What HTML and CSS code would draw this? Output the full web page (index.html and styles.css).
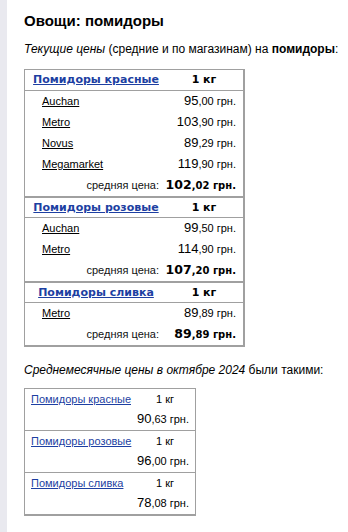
FILE: index.html
```html
<!DOCTYPE html>
<html lang="ru">
<head>
<meta charset="utf-8">
<link rel="stylesheet" href="styles.css">
</head>
<body>
<div class="page">
  <div class="strip"></div>
  <main class="content">
    <h1 class="title">Овощи: помидоры</h1>
    <p class="intro"><i>Текущие цены</i> (средние и по магазинам) на <b>помидоры</b>:</p>

    <table class="prices">
      <tr class="head"><td class="prod"><a href="#">Помидоры красные</a></td><td class="unit">1 кг</td></tr>
      <tr class="shop"><td><a href="#">Auchan</a></td><td class="pr"><span class="big">95</span>,00 грн.</td></tr>
      <tr class="shop"><td><a href="#">Metro</a></td><td class="pr"><span class="big">103</span>,90 грн.</td></tr>
      <tr class="shop"><td><a href="#">Novus</a></td><td class="pr"><span class="big">89</span>,29 грн.</td></tr>
      <tr class="shop"><td><a href="#">Megamarket</a></td><td class="pr"><span class="big">119</span>,90 грн.</td></tr>
      <tr class="avg"><td class="lbl">средняя цена:</td><td class="pr"><span class="big">102</span>,02 грн.</td></tr>

      <tr class="head"><td class="prod"><a href="#">Помидоры розовые</a></td><td class="unit">1 кг</td></tr>
      <tr class="shop"><td><a href="#">Auchan</a></td><td class="pr"><span class="big">99</span>,50 грн.</td></tr>
      <tr class="shop"><td><a href="#">Metro</a></td><td class="pr"><span class="big">114</span>,90 грн.</td></tr>
      <tr class="avg"><td class="lbl">средняя цена:</td><td class="pr"><span class="big">107</span>,20 грн.</td></tr>

      <tr class="head"><td class="prod"><a href="#">Помидоры сливка</a></td><td class="unit">1 кг</td></tr>
      <tr class="shop"><td><a href="#">Metro</a></td><td class="pr"><span class="big">89</span>,89 грн.</td></tr>
      <tr class="avg"><td class="lbl">средняя цена:</td><td class="pr"><span class="big">89</span>,89 грн.</td></tr>
    </table>

    <p class="intro month"><i>Среднемесячные цены в октябре 2024</i> были такими:</p>

    <table class="monthly">
      <tr class="mhead"><td class="mprod"><a href="#">Помидоры красные</a></td><td class="munit">1 кг</td></tr>
      <tr class="mprice"><td></td><td class="pr"><span class="big">90</span>,63 грн.</td></tr>
      <tr class="mhead"><td class="mprod"><a href="#">Помидоры розовые</a></td><td class="munit">1 кг</td></tr>
      <tr class="mprice"><td></td><td class="pr"><span class="big">96</span>,00 грн.</td></tr>
      <tr class="mhead"><td class="mprod"><a href="#">Помидоры сливка</a></td><td class="munit">1 кг</td></tr>
      <tr class="mprice"><td></td><td class="pr"><span class="big">78</span>,08 грн.</td></tr>
    </table>

    <h2 class="next">Минимальные цены на помидоры в Днепре</h2>
  </main>
</div>
</body>
</html>
```

FILE: styles.css
```css
html, body {
  margin: 0;
  padding: 0;
  background: #fff;
}
body {
  font-family: "Liberation Sans", Arial, sans-serif;
  color: #000;
}
.page {
  display: flex;
  min-height: 532px;
}
.strip {
  width: 7px;
  flex: none;
  background: #e9e9ef;
}
.content {
  padding: 0 0 0 17px;
  flex: 1;
  min-width: 0;
}
.title {
  font-size: 15px;
  font-weight: bold;
  margin: 12px 0 0;
  line-height: 18px;
}
.intro {
  font-size: 12px;
  margin: 12px 0 0;
  line-height: 15px;
  white-space: nowrap;
}
.prices {
  margin-top: 12px;
  width: 221px;
  border-collapse: collapse;
  border: 1px solid #a0a0a0;
  border-bottom-width: 2px;
  border-right-width: 2px;
}
.prices td {
  padding: 0;
}
.head td {
  line-height: 19px;
  border-top: 2px solid #a0a0a0;
  border-bottom: 1px solid #a0a0a0;
  font-family: "DejaVu Sans", Verdana, sans-serif;
  font-weight: bold;
  font-size: 11px;
  vertical-align: middle;
}
.prices tr.head:first-child td {
  border-top: 0;
  line-height: 20px;
}
.head .prod {
  text-align: center;
  padding-left: 2px;
}
.head a {
  color: #1d3fa2;
  text-decoration: underline;
}
.head .unit {
  text-align: center;
  width: 78px;
}
.shop td {
  line-height: 21px;
  font-size: 11px;
  vertical-align: middle;
}
.shop td:first-child {
  padding-left: 17px;
}
.shop a {
  color: #000;
  text-decoration: underline;
}
.pr {
  text-align: right;
  padding-right: 7px !important;
  font-size: 11px;
  white-space: nowrap;
}
.pr .big {
  font-size: 13px;
  line-height: 1;
}
.avg td {
  line-height: 21px;
  vertical-align: middle;
}
.avg .lbl {
  text-align: right;
  font-size: 11px;
  padding-right: 6px;
  color: #111;
}
.avg .pr {
  font-family: "DejaVu Sans", Verdana, sans-serif;
  font-weight: bold;
  font-size: 10px;
}
.avg .pr .big {
  font-size: 12.5px;
}
.month {
  margin-top: 16px;
}
.monthly {
  margin-top: 10px;
  width: 172px;
  border-collapse: collapse;
  border: 1px solid #a0a0a0;
  border-bottom-width: 2px;
}
.monthly td {
  padding: 0;
  font-size: 11px;
}
.mhead td {
  line-height: 20px;
  vertical-align: middle;
}
.mhead + .mprice + .mhead td {
  border-top: 1px solid #a0a0a0;
}
.mprod {
  padding-left: 6px !important;
}
.mprod a {
  color: #1d3fa2;
  text-decoration: underline;
}
.munit {
  text-align: center;
  width: 60px;
}
.mprice td {
  line-height: 21px;
  vertical-align: middle;
}
.monthly .pr {
  padding-right: 6px !important;
}
.next {
  font-size: 15px;
  font-weight: bold;
  margin: 14px 0 0;
  line-height: 18px;
}
```
